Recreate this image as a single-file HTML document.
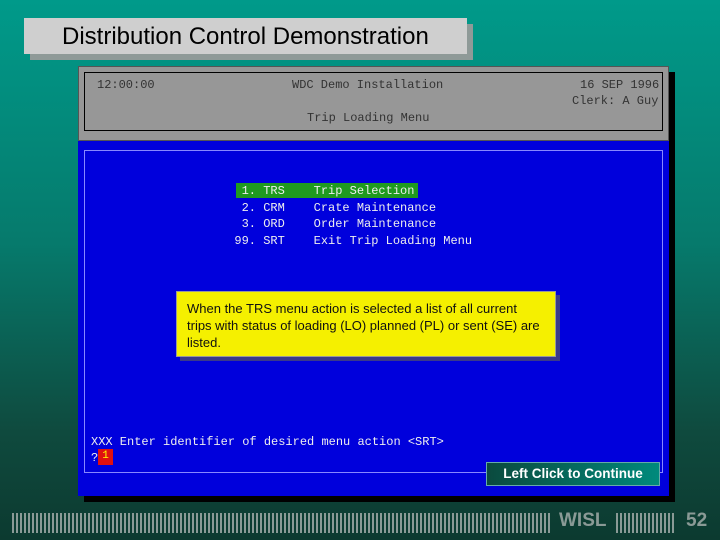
<!DOCTYPE html>
<html><head><style>
body{margin:0;width:720px;height:540px;overflow:hidden;background:linear-gradient(#009a8a 0%,#067a6c 45%,#0f4a3e 80%,#0c3a30 100%);font-family:"Liberation Sans",sans-serif;position:relative}
.a{position:absolute}
.m{font-family:"Liberation Mono",monospace;font-size:12px;white-space:pre}
</style></head><body>
<div class="a" style="left:30px;top:24px;width:443px;height:36px;background:#8f9a98"></div>
<div class="a" style="left:24px;top:18px;width:443px;height:36px;background:#cfcfcf;font-size:24px;line-height:38px;color:#000"><span class="a" style="left:38px;top:0;white-space:nowrap">Distribution Control Demonstration</span></div>
<div class="a" style="left:84px;top:72px;width:591px;height:430px;background:#000"></div>
<div class="a" style="left:78px;top:66px;width:591px;height:75px;background:#979797;box-sizing:border-box;border:1px solid #555"></div>
<div class="a" style="left:84px;top:72px;width:579px;height:59px;box-sizing:border-box;border:1px solid #000"></div>
<div class="a m" style="left:97px;top:78px;color:#333">12:00:00</div>
<div class="a m" style="left:292px;top:78px;color:#333">WDC Demo Installation</div>
<div class="a m" style="left:580px;top:78px;color:#333">16 SEP 1996</div>
<div class="a m" style="left:572px;top:94px;color:#333">Clerk: A Guy</div>
<div class="a m" style="left:307px;top:111px;color:#333">Trip Loading Menu</div>
<div class="a" style="left:78px;top:141px;width:591px;height:355px;background:#0000dc"></div>
<div class="a" style="left:84px;top:150px;width:579px;height:323px;box-sizing:border-box;border:1px solid #8888ff"></div>
<div class="a" style="left:236px;top:183px;width:182px;height:15px;background:#1f9a1f"></div>
<div class="a m" style="left:220px;top:183px;color:#eee;line-height:16.7px">   1. TRS    Trip Selection
   2. CRM    Crate Maintenance
   3. ORD    Order Maintenance
  99. SRT    Exit Trip Loading Menu</div>
<div class="a" style="left:180px;top:295px;width:380px;height:66px;background:#3a3a8a"></div>
<div class="a" style="left:176px;top:291px;width:380px;height:66px;background:#f5f000;box-sizing:border-box;border:1px solid #999;padding:8px 10px;font-size:13px;line-height:17px;color:#111">When the TRS menu action is selected a list of all current trips with status of loading (LO) planned (PL) or sent (SE) are listed.</div>
<div class="a m" style="left:91px;top:435px;color:#eee">XXX Enter identifier of desired menu action &lt;SRT&gt;</div>
<div class="a m" style="left:91px;top:451px;color:#eee">?</div>
<div class="a" style="left:98px;top:449px;width:15px;height:16px;background:#e01010;color:#ff0;font-family:'Liberation Mono',monospace;font-size:11px;text-align:center;line-height:14px">1</div>
<div class="a" style="left:486px;top:462px;width:174px;height:24px;box-sizing:border-box;border:1px solid #6aa;background:linear-gradient(90deg,#0b4a3e,#008a7c);color:#fff;font-weight:bold;font-size:13.5px;line-height:22px;text-align:center">Left Click to Continue</div>
<div class="a" style="left:12px;top:513px;width:538px;height:20px;background:repeating-linear-gradient(90deg,#8a9a96 0 2px,transparent 2px 4px)"></div>
<div class="a" style="left:559px;top:510px;color:#8a9a96;font-weight:bold;font-size:19px">WISL</div>
<div class="a" style="left:616px;top:513px;width:58px;height:20px;background:repeating-linear-gradient(90deg,#8a9a96 0 2px,transparent 2px 4px)"></div>
<div class="a" style="left:686px;top:510px;color:#8a9a96;font-weight:bold;font-size:19px">52</div>
</body></html>
